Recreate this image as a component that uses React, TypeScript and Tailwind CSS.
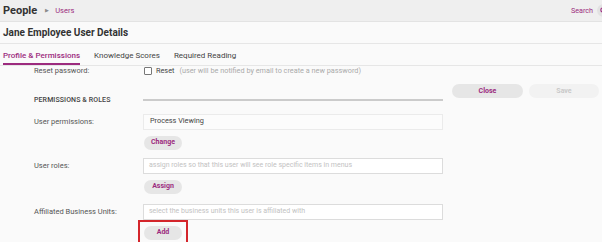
const purple = 'text-[#9c2b7e]'

function PillButton({ label, muted }: { label: string; muted?: boolean }) {
  return (
    <button
      className={
        'h-[14px] rounded-full text-[7px] font-bold leading-none ' +
        (muted ? 'bg-[#f2f2f2] text-[#c9c9c9]' : 'bg-[#e6e6e6] text-[#9c2b7e]')
      }
    >
      {label}
    </button>
  )
}

function FieldRow({
  label,
  children,
}: {
  label: string
  children: React.ReactNode
}) {
  return (
    <div className="grid grid-cols-[109px_300px] items-center">
      <span className="text-[7.5px] text-[#555]">{label}</span>
      {children}
    </div>
  )
}

export default function App() {
  return (
    <div className="w-[602px] h-[242px] overflow-hidden bg-[#fafafa] font-['Roboto',sans-serif]">
      {/* Breadcrumb bar */}
      <header className="h-[22px] bg-[#efefef] border-b border-[#e3e3e3] flex items-center pl-[3px] overflow-hidden">
        <span className="text-[11px] font-bold text-[#333] leading-none">People</span>
        <span className="ml-[8px] text-[5px] text-[#8a8a8a] leading-none">▶</span>
        <span className={`ml-[6px] text-[7.5px] leading-none ${purple}`}>Users</span>
        <div className="ml-auto flex items-center shrink-0 translate-x-[8px]">
          <span className={`text-[7.2px] leading-none ${purple}`}>Search</span>
          <span className="ml-[4px] w-[13px] h-[13px] rounded-full bg-[#e2e2e2] flex items-center justify-center">
            <svg width="7" height="7" viewBox="0 0 10 10" fill="none" stroke="#9c2b7e" strokeWidth="1.6">
              <circle cx="4.2" cy="4.2" r="3" />
              <path d="M6.4 6.4 9 9" />
            </svg>
          </span>
        </div>
      </header>

      {/* Title */}
      <div className="h-[22px] border-b border-[#e6e6e6] flex items-center pl-[3px]">
        <h1 className="text-[10px] font-bold text-[#333] leading-none">Jane Employee User Details</h1>
      </div>

      {/* Tabs */}
      <nav className="h-[22px] border-b border-[#e6e6e6] flex pl-[3px] gap-[14px]">
        <span className={`flex items-center pt-[4px] border-b-[2.5px] border-[#9c2b7e] text-[8px] font-medium ${purple}`}>
          Profile &amp; Permissions
        </span>
        <span className="flex items-center pt-[4px] border-b-[2.5px] border-transparent text-[8px] text-[#444]">
          Knowledge Scores
        </span>
        <span className="flex items-center pt-[4px] border-b-[2.5px] border-transparent text-[8px] text-[#444]">
          Required Reading
        </span>
      </nav>

      {/* Body */}
      <div className="h-[176px] overflow-hidden flex pl-[34px]">
        <div className="w-[409px] -mt-[2px] flex flex-col">
          <FieldRow label="Reset password:">
            <div className="h-[14px] flex items-center ml-[1px]">
              <span className="w-[8px] h-[8px] border border-[#777] rounded-[1px] bg-white" />
              <span className="ml-[4px] text-[7.3px] text-[#444]">Reset</span>
              <span className="ml-[5px] text-[7.3px] text-[#aaa]">
                (user will be notified by email to create a new password)
              </span>
            </div>
          </FieldRow>

          <div className="mt-[17px] h-[14px] grid grid-cols-[109px_300px] items-center">
            <span className="text-[7px] font-medium text-[#444] tracking-[0.1px]">PERMISSIONS &amp; ROLES</span>
            <span className="h-[2px] bg-[#cbcbcb]" />
          </div>

          <div className="mt-[8px]">
            <FieldRow label="User permissions:">
              <div className="h-[16px] border border-[#ebebeb] bg-[#fcfcfc] flex items-center pl-[6px] text-[7.3px] text-[#444]">
                Process Viewing
              </div>
            </FieldRow>
          </div>
          <div className="mt-[6px] pl-[110px] flex">
            <span className="w-[38px] grid"><PillButton label="Change" /></span>
          </div>

          <div className="mt-[8px]">
            <FieldRow label="User roles:">
              <div className="h-[16px] border border-[#dcdcdc] bg-white flex items-center pl-[5px] text-[7px] text-[#c2c2c2]">
                assign roles so that this user will see role specific items in menus
              </div>
            </FieldRow>
          </div>
          <div className="mt-[6px] pl-[110px] flex">
            <span className="w-[38px] grid"><PillButton label="Assign" /></span>
          </div>

          <div className="mt-[10px]">
            <FieldRow label="Affiliated Business Units:">
              <div className="h-[16px] border border-[#dcdcdc] bg-white flex items-center pl-[5px] text-[7px] text-[#c2c2c2]">
                select the business units this user is affiliated with
              </div>
            </FieldRow>
          </div>
          <div className="pl-[104px] flex">
            <span className="border-2 border-[#d4252b] p-[4px] grid">
              <span className="w-[38px] grid"><PillButton label="Add" /></span>
            </span>
          </div>
        </div>

        {/* Actions */}
        <div className="ml-[9px] pt-[18px] flex gap-[6px] items-start">
          <span className="w-[71px] grid"><PillButton label="Close" /></span>
          <span className="w-[70px] grid"><PillButton label="Save" muted /></span>
        </div>
      </div>
    </div>
  )
}
